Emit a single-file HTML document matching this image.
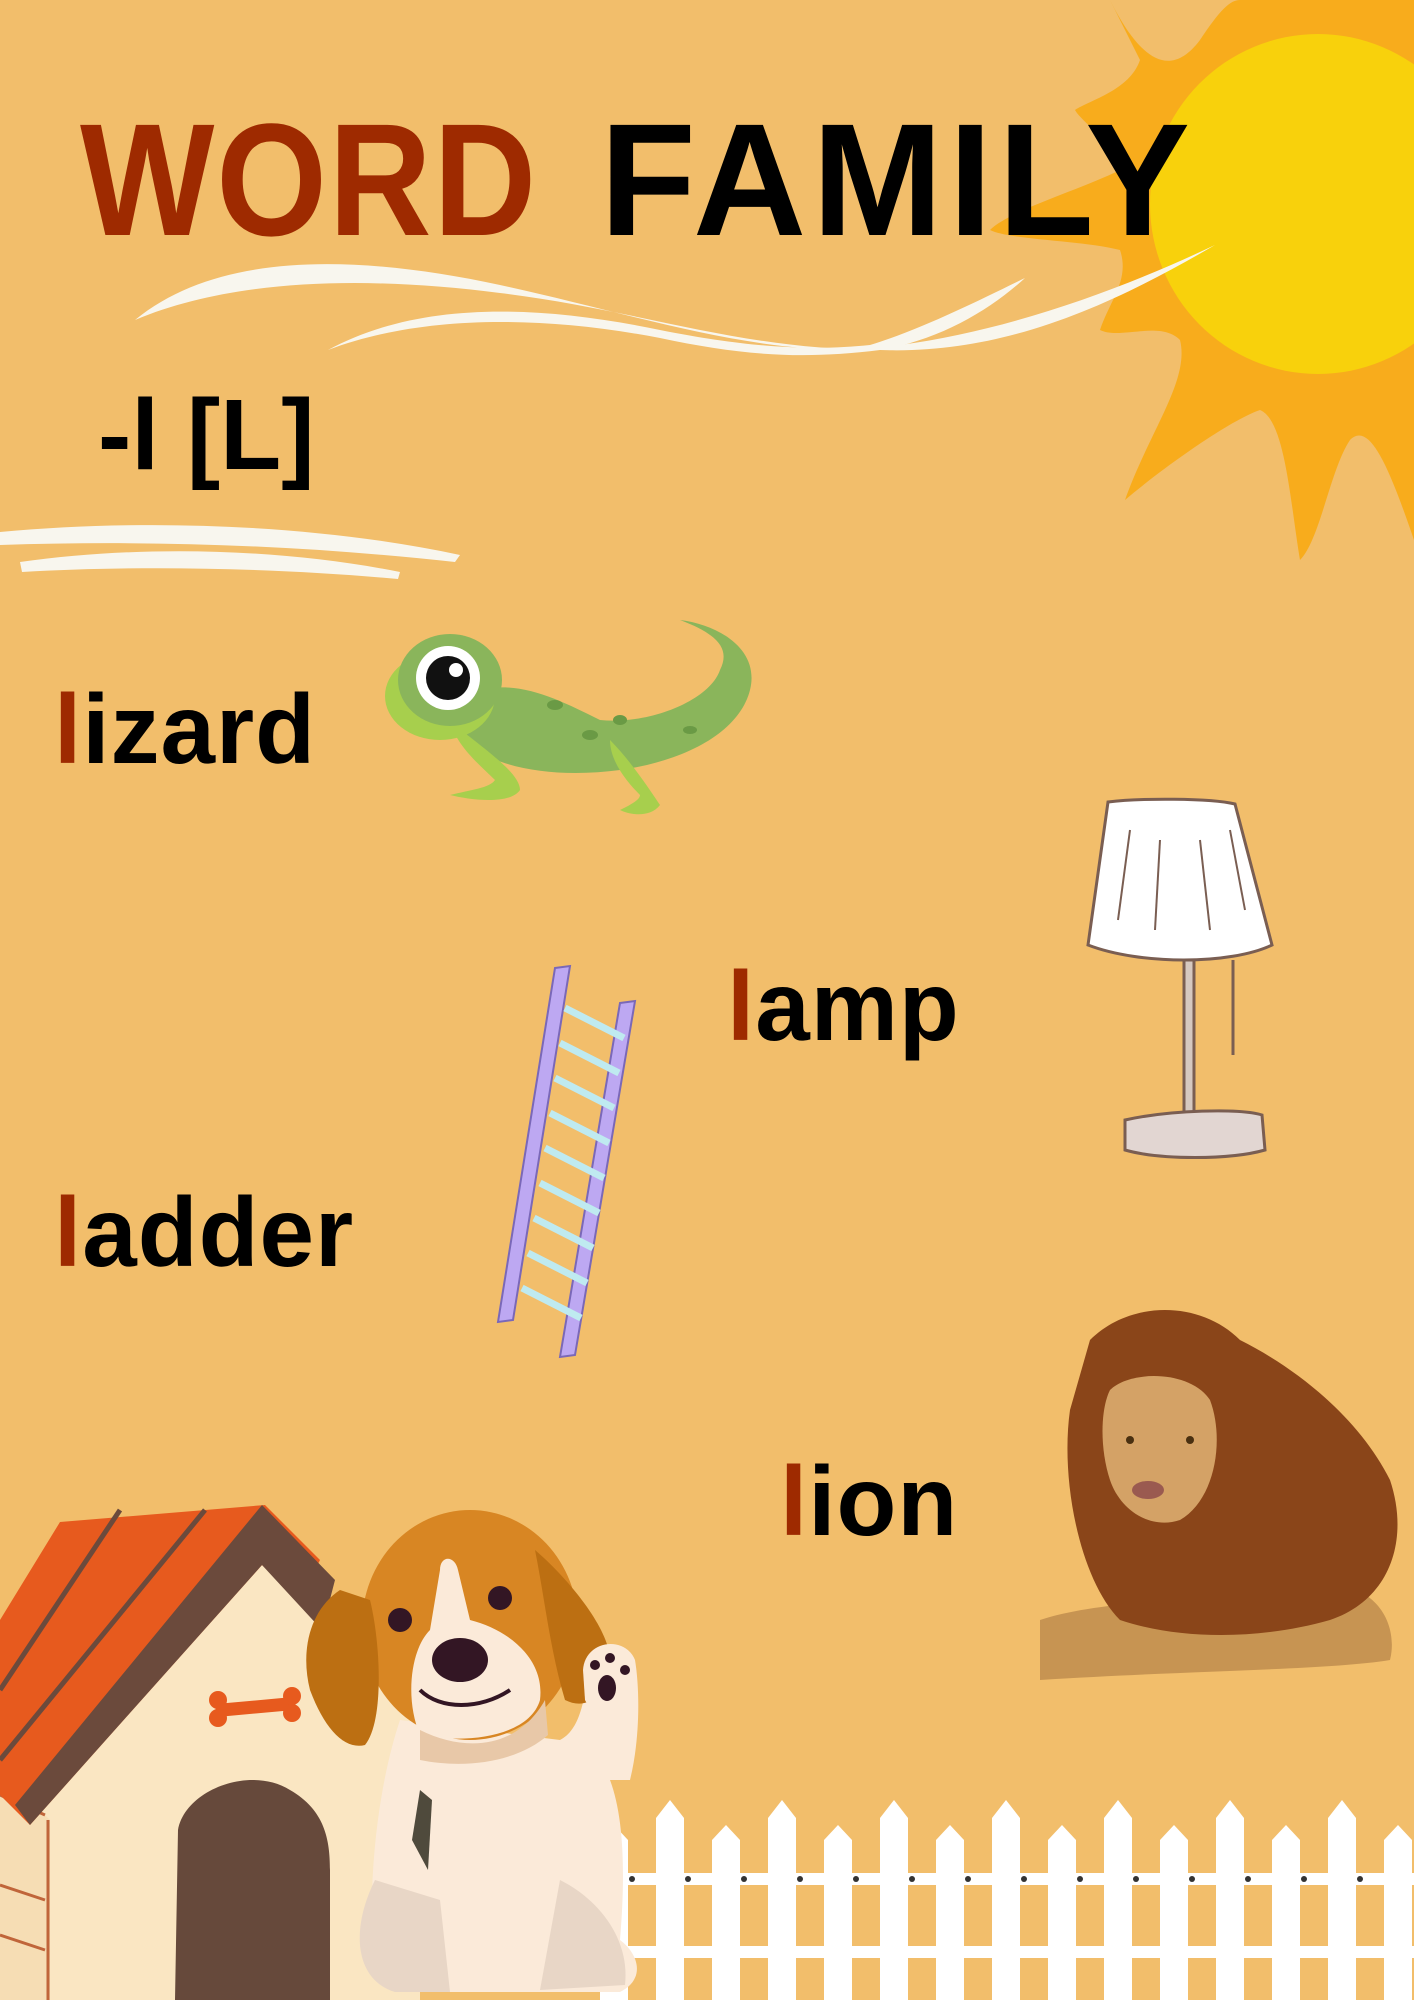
<!DOCTYPE html>
<html><head><meta charset="utf-8"><style>
html,body{margin:0;padding:0}
body{width:1414px;height:2000px;background:#F2BE6B;position:relative;overflow:hidden;font-family:"Liberation Sans",sans-serif}
svg{position:absolute;left:0;top:0}
.t{position:absolute;font-weight:bold;white-space:nowrap;line-height:1}
.w{font-size:98px;color:#000;letter-spacing:1px}
.w b{color:#9E2A00}
</style></head><body>
<svg width="1414" height="2000" viewBox="0 0 1414 2000">
  <path d="M1110 0 C1140 60 1170 80 1200 40 C1220 10 1230 0 1240 0 L1414 0 L1414 540 C1390 470 1370 420 1350 440 C1330 470 1320 540 1300 560 C1290 500 1285 420 1260 410 C1230 420 1160 470 1125 500 C1150 430 1190 380 1180 340 C1160 320 1120 340 1100 330 C1110 300 1130 280 1120 250 C1080 240 1010 240 990 230 C1010 210 1080 190 1120 170 C1110 140 1080 120 1075 110 C1090 100 1130 90 1140 60 Z" fill="#F8AC1C"/>
  <ellipse cx="1318" cy="204" rx="168" ry="170" fill="#F8D10C"/>
  <path d="M135 320 C220 250 360 255 500 285 C640 315 780 365 900 345 C1010 330 1120 290 1215 245 C1120 300 1010 355 880 350 C740 350 640 310 500 293 C360 275 230 280 135 320 Z" fill="#F8F6EE"/>
  <path d="M328 350 C420 300 540 305 660 330 C760 350 820 350 870 345 C920 330 980 300 1025 278 C990 310 940 340 880 350 C800 360 740 355 660 338 C540 315 420 315 328 350 Z" fill="#F8F6EE"/>
  <path d="M0 532 C150 518 320 525 460 555 L455 562 C300 545 150 540 0 545 Z" fill="#F8F6EE"/>
  <path d="M20 562 C140 545 280 548 400 572 L398 579 C280 568 140 565 22 572 Z" fill="#F8F6EE"/>
  <g>
    <path d="M680 620 C720 625 760 650 750 690 C740 730 690 760 620 770 C560 778 500 770 470 745 C450 730 460 700 480 690 C520 680 560 700 600 720 C650 725 710 700 720 670 C730 650 720 635 680 620 Z" fill="#8AB55B"/>
    <path d="M450 720 C470 740 520 770 520 790 C510 805 470 800 450 795 C470 790 490 788 495 780 C480 765 455 745 450 720 Z" fill="#A7CF4D"/>
    <path d="M610 740 C630 760 650 790 660 805 C650 818 630 815 620 810 C630 805 640 800 640 795 C625 780 610 760 610 740 Z" fill="#A7CF4D"/>
    <ellipse cx="440" cy="696" rx="55" ry="44" fill="#A7CF4D"/>
    <ellipse cx="450" cy="680" rx="52" ry="46" fill="#8AB55B"/>
    <circle cx="448" cy="678" r="32" fill="#fff"/>
    <circle cx="448" cy="678" r="22" fill="#111"/>
    <circle cx="456" cy="670" r="7" fill="#fff"/>
    <g fill="#6a9a45"><ellipse cx="555" cy="705" rx="8" ry="5"/><ellipse cx="590" cy="735" rx="8" ry="5"/><ellipse cx="620" cy="720" rx="7" ry="5"/><ellipse cx="690" cy="730" rx="7" ry="4"/></g>
  </g>
  <g stroke="#7a5e52" stroke-width="3">
    <rect x="1184" y="960" width="10" height="160" fill="#d6c8c0"/>
    <path d="M1125 1120 C1170 1110 1240 1108 1262 1115 L1265 1150 C1230 1160 1160 1160 1125 1150 Z" fill="#E2D6D2"/>
    <path d="M1108 802 C1140 798 1210 798 1235 804 L1272 945 C1230 965 1140 965 1088 945 Z" fill="#fff"/>
    <path d="M1233 960 L1233 1055" fill="none"/>
    <g stroke-width="2"><line x1="1130" y1="830" x2="1118" y2="920"/><line x1="1160" y1="840" x2="1155" y2="930"/><line x1="1200" y1="840" x2="1210" y2="930"/><line x1="1230" y1="830" x2="1245" y2="910"/></g>
  </g>
  <g>
    <polygon points="555,968 570,966 513,1320 498,1322" fill="#BDA8F2" stroke="#7a68b8" stroke-width="2"/>
    <polygon points="620,1003 635,1001 575,1355 560,1357" fill="#BDA8F2" stroke="#7a68b8" stroke-width="2"/>
    <g stroke="#BFEAF0" stroke-width="7">
      <line x1="565" y1="1008" x2="624" y2="1038"/><line x1="560" y1="1043" x2="619" y2="1073"/>
      <line x1="555" y1="1078" x2="614" y2="1108"/><line x1="550" y1="1113" x2="609" y2="1143"/>
      <line x1="545" y1="1148" x2="604" y2="1178"/><line x1="540" y1="1183" x2="599" y2="1213"/>
      <line x1="534" y1="1218" x2="593" y2="1248"/><line x1="528" y1="1253" x2="587" y2="1283"/>
      <line x1="522" y1="1288" x2="581" y2="1318"/>
    </g>
  </g>
  <g>
    <path d="M1040 1620 C1100 1600 1200 1600 1300 1590 C1370 1570 1400 1620 1390 1660 C1330 1670 1200 1670 1040 1680 Z" fill="#C79452"/>
    <path d="M1090 1340 C1130 1300 1200 1300 1240 1340 C1300 1370 1360 1420 1390 1480 C1410 1540 1390 1600 1330 1620 C1260 1640 1180 1640 1120 1620 C1080 1580 1060 1480 1070 1410 Z" fill="#8A4519"/>
    <path d="M1110 1390 C1130 1370 1190 1370 1210 1400 C1225 1440 1215 1500 1180 1520 C1150 1530 1120 1510 1110 1480 C1100 1450 1100 1410 1110 1390 Z" fill="#D4A266"/>
    <circle cx="1130" cy="1440" r="4" fill="#4a3010"/><circle cx="1190" cy="1440" r="4" fill="#4a3010"/>
    <ellipse cx="1148" cy="1490" rx="16" ry="9" fill="#9a5a50"/>
  </g>
  <g>
    <path d="M0 1750 L0 2000 L420 2000 L420 1700 L262 1540 L60 1780 Z" fill="#FAE6C2"/>
    <path d="M0 1770 L50 1820 L50 2000 L0 2000 Z" fill="#F6DDB4"/>
    <line x1="48" y1="1820" x2="48" y2="2000" stroke="#C0653A" stroke-width="3"/>
    <g stroke="#C0653A" stroke-width="3"><line x1="0" y1="1885" x2="45" y2="1900"/><line x1="0" y1="1935" x2="45" y2="1950"/><line x1="0" y1="1795" x2="45" y2="1815"/></g>
    <path d="M0 1620 L60 1522 L265 1505 L320 1560 L300 1600 L262 1565 L30 1825 L0 1795 Z" fill="#E75A1E"/>
    <path d="M262 1505 L335 1580 L322 1630 L262 1565 L30 1825 L15 1805 Z" fill="#6B4A3C"/>
    <g stroke="#6B4A3C" stroke-width="5"><line x1="120" y1="1510" x2="0" y2="1690"/><line x1="205" y1="1510" x2="0" y2="1760"/></g>
    <path d="M175 2000 L178 1830 C185 1790 250 1765 290 1790 C325 1810 330 1840 330 1870 L330 2000 Z" fill="#66493B"/>
    <path d="M222 1710 L288 1704" stroke="#E75A1E" stroke-width="13" stroke-linecap="round"/>
    <g fill="#E75A1E"><circle cx="218" cy="1700" r="9"/><circle cx="218" cy="1718" r="9"/><circle cx="292" cy="1696" r="9"/><circle cx="292" cy="1713" r="9"/></g>
  </g>
  <g fill="#fff">
    <rect x="600" y="1873" width="814" height="12"/>
    <rect x="600" y="1946" width="814" height="12"/>
    <g id="pk">
      <path d="M600 2000 L600 1840 L614 1825 L628 1840 L628 2000 Z"/>
      <path d="M656 2000 L656 1818 L670 1800 L684 1818 L684 2000 Z"/>
    </g>
    <use href="#pk" x="112"/><use href="#pk" x="224"/><use href="#pk" x="336"/>
    <use href="#pk" x="448"/><use href="#pk" x="560"/><use href="#pk" x="672"/>
    <use href="#pk" x="784"/>
  </g>
  <g fill="#333"><circle cx="632" cy="1879" r="3"/><circle cx="688" cy="1879" r="3"/><circle cx="744" cy="1879" r="3"/><circle cx="800" cy="1879" r="3"/><circle cx="856" cy="1879" r="3"/><circle cx="912" cy="1879" r="3"/><circle cx="968" cy="1879" r="3"/><circle cx="1024" cy="1879" r="3"/><circle cx="1080" cy="1879" r="3"/><circle cx="1136" cy="1879" r="3"/><circle cx="1192" cy="1879" r="3"/><circle cx="1248" cy="1879" r="3"/><circle cx="1304" cy="1879" r="3"/><circle cx="1360" cy="1879" r="3"/></g>
  <g>
    <path d="M400 1720 C380 1780 370 1860 372 1930 C360 1960 365 1985 400 1992 L620 1992 C645 1980 640 1955 620 1940 C625 1880 625 1820 610 1780 L630 1780 C640 1740 640 1690 635 1660 L590 1660 C585 1700 580 1730 560 1740 Z" fill="#FBEAD9"/>
    <path d="M375 1880 C350 1930 355 1980 395 1992 L450 1992 L440 1900 Z" fill="#E8D6C6"/>
    <path d="M560 1880 C600 1900 630 1940 625 1985 L540 1990 Z" fill="#E8D6C6"/>
    <path d="M420 1790 L412 1840 L428 1870 L432 1800 Z" fill="#4F4A3C"/>
    <ellipse cx="470" cy="1625" rx="108" ry="115" fill="#D88623"/>
    <path d="M340 1590 C310 1610 300 1650 310 1690 C325 1730 345 1750 365 1745 C385 1720 380 1640 370 1600 Z" fill="#BC6F12"/>
    <path d="M535 1550 C570 1580 610 1630 610 1660 C605 1700 585 1710 565 1700 C550 1650 545 1600 535 1550 Z" fill="#BC6F12"/>
    <path d="M440 1570 C440 1555 455 1555 458 1570 L470 1620 C510 1630 545 1660 540 1700 C530 1735 470 1745 420 1735 C405 1700 410 1650 430 1630 Z" fill="#FBEAD9"/>
    <path d="M420 1730 C470 1755 520 1745 545 1700 L548 1735 C520 1760 470 1770 420 1760 Z" fill="#E8C8A8"/>
    <ellipse cx="460" cy="1660" rx="28" ry="22" fill="#331624"/>
    <path d="M420 1690 C440 1710 480 1710 510 1690" stroke="#331624" stroke-width="4" fill="none"/>
    <circle cx="400" cy="1620" r="12" fill="#331624"/><circle cx="500" cy="1598" r="12" fill="#331624"/>
    <path d="M583 1670 C585 1640 625 1635 635 1660 L635 1700 C625 1720 595 1720 585 1700 Z" fill="#FBEAD9"/>
    <ellipse cx="607" cy="1688" rx="9" ry="13" fill="#331624"/>
    <circle cx="595" cy="1665" r="5" fill="#331624"/><circle cx="610" cy="1658" r="5" fill="#331624"/><circle cx="625" cy="1670" r="5" fill="#331624"/>
  </g>
</svg>
<div class="t" style="left:80px;top:100px;font-size:160px;color:#9E2A00;letter-spacing:2px;transform:scaleX(0.89);transform-origin:0 0">WORD</div>
<div class="t" style="left:600px;top:100px;font-size:160px;color:#000;letter-spacing:6px;transform:scaleX(0.98);transform-origin:0 0">FAMILY</div>
<div class="t" style="left:98px;top:385px;font-size:100px;color:#000">-l [L]</div>
<div class="t w" style="left:54px;top:680px"><b>l</b>izard</div>
<div class="t w" style="left:727px;top:957px"><b>l</b>amp</div>
<div class="t w" style="left:54px;top:1183px"><b>l</b>adder</div>
<div class="t w" style="left:780px;top:1452px"><b>l</b>ion</div>
</body></html>
